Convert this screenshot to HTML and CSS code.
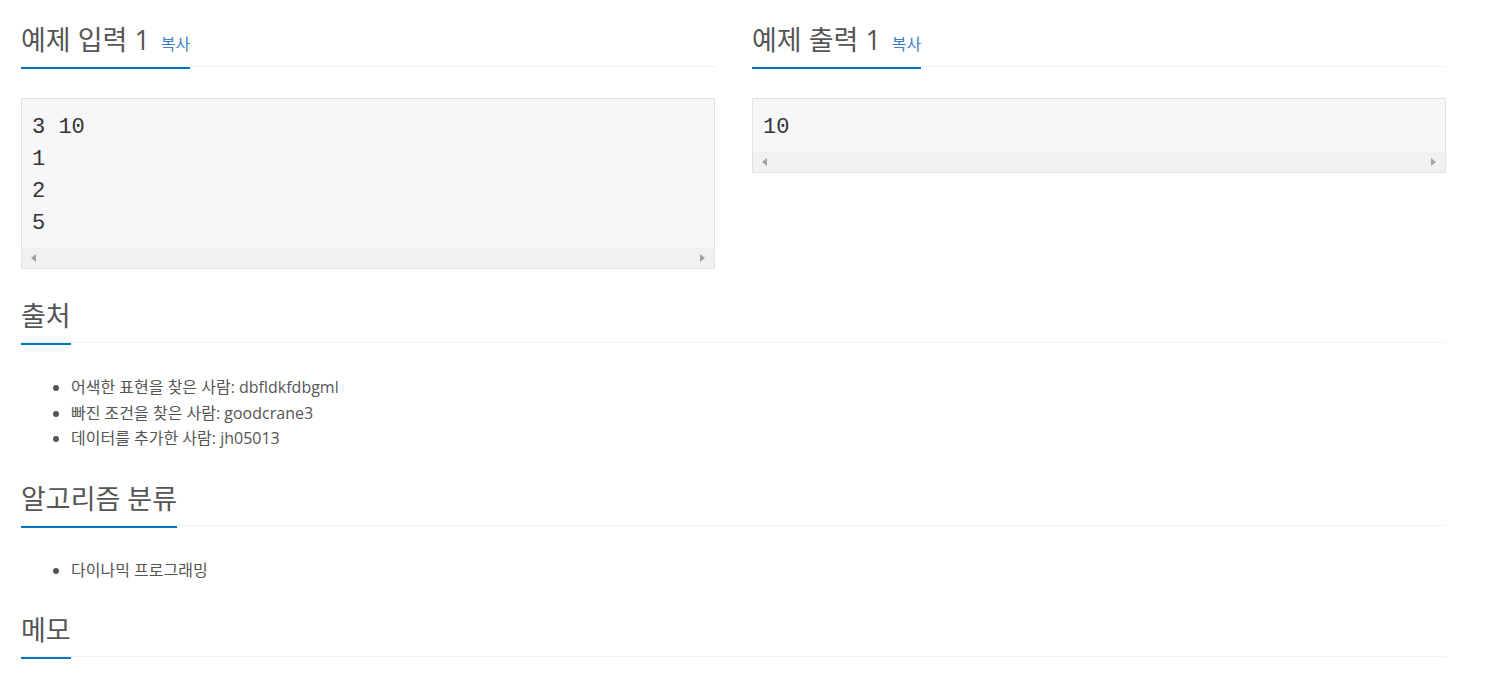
FILE: index.html
```html
<!DOCTYPE html>
<html lang="ko">
<head>
    <meta charset="UTF-8">
    <meta name="viewport" content="width=device-width, initial-scale=1.0">
    <title>문제</title>
    <link rel="stylesheet" href="styles.css">
</head>
<body>
    <div class="page">
        <div class="samples">
            <section class="section">
                <div class="headline">
                    <h2>예제 입력 1 <span class="copy">복사</span></h2>
                </div>
                <div class="sample">
                    <pre>3 10
1
2
5</pre>
                    <div class="scrollbar">
                        <span class="arrow left"></span>
                        <span class="arrow right"></span>
                    </div>
                </div>
            </section>
            <section class="section">
                <div class="headline">
                    <h2>예제 출력 1 <span class="copy">복사</span></h2>
                </div>
                <div class="sample">
                    <pre>10</pre>
                    <div class="scrollbar">
                        <span class="arrow left"></span>
                        <span class="arrow right"></span>
                    </div>
                </div>
            </section>
        </div>

        <section class="section">
            <div class="headline">
                <h2>출처</h2>
            </div>
            <ul>
                <li>어색한 표현을 찾은 사람: dbfldkfdbgml</li>
                <li>빠진 조건을 찾은 사람: goodcrane3</li>
                <li>데이터를 추가한 사람: jh05013</li>
            </ul>
        </section>

        <section class="section">
            <div class="headline">
                <h2>알고리즘 분류</h2>
            </div>
            <ul>
                <li>다이나믹 프로그래밍</li>
            </ul>
        </section>

        <section class="section">
            <div class="headline">
                <h2>메모</h2>
            </div>
        </section>
    </div>
</body>
</html>
```

FILE: styles.css
```css
*{
    margin: 0;
    padding: 0;
    box-sizing: border-box;
}
body{
    font-family: "Open Sans", "Noto Sans CJK KR", sans-serif;
    color: #555;
    background: #fff;
}
.page
{
    width: 1446px;
    padding: 22px 0 0 21px;
}
.samples
{
    display: grid;
    grid-template-columns: 694px 694px;
    column-gap: 37px;
    align-items: start;
}
.section
{
    margin-bottom: 29px;
}
.headline
{
    display: flex;
    border-bottom: 1px dotted #e4e6ea;
    margin-bottom: 31px;
}
.headline h2
{
    height: 47px;
    font-size: 27px;
    font-weight: normal;
    line-height: 36px;
    padding-bottom: 9px;
    margin-bottom: -3px;
    border-bottom: 2px solid #0076c0;
    color: #555;
    white-space: nowrap;
}
.copy
{
    font-size: 16px;
    line-height: 1;
    color: #3c7fc4;
    margin-left: 4px;
}
.sample
{
    border: 1px solid #e1e1e8;
    background: #f7f7f9;
}
.sample pre
{
    font-family: "Liberation Mono", monospace;
    font-size: 22px;
    line-height: 32px;
    color: #333;
    padding: 13px 10px 8px 10px;
}
.scrollbar
{
    height: 20px;
    background: #f1f1f1;
    display: flex;
    justify-content: space-between;
    align-items: center;
    padding: 0 9px;
}
.arrow
{
    width: 0;
    height: 0;
    border-top: 4px solid transparent;
    border-bottom: 4px solid transparent;
}
.arrow.left
{
    border-right: 5px solid #a3a3a3;
}
.arrow.right
{
    border-left: 5px solid #a3a3a3;
}
ul
{
    padding: 1px 0 0 50px;
    font-size: 16px;
    line-height: 25.5px;
}
li
{
    height: 25.5px;
}
```
